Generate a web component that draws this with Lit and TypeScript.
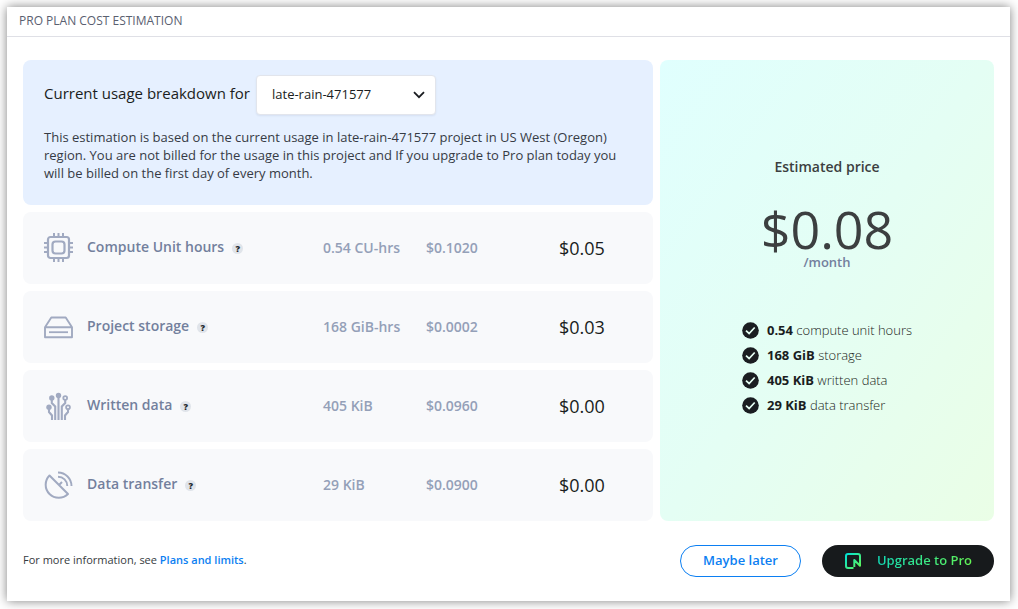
import { LitElement, html, css, svg } from "lit";
import { customElement, property } from "lit/decorators.js";

interface UsageRow {
  icon: string;
  name: string;
  usage: string;
  rate: string;
  total: string;
}

const ROWS: UsageRow[] = [
  { icon: "chip", name: "Compute Unit hours", usage: "0.54 CU-hrs", rate: "$0.1020", total: "$0.05" },
  { icon: "drive", name: "Project storage", usage: "168 GiB-hrs", rate: "$0.0002", total: "$0.03" },
  { icon: "branches", name: "Written data", usage: "405 KiB", rate: "$0.0960", total: "$0.00" },
  { icon: "dish", name: "Data transfer", usage: "29 KiB", rate: "$0.0900", total: "$0.00" },
];

const INCLUDED = [
  { amount: "0.54", label: "compute unit hours" },
  { amount: "168 GiB", label: "storage" },
  { amount: "405 KiB", label: "written data" },
  { amount: "29 KiB", label: "data transfer" },
];

const ICONS: Record<string, unknown> = {
  chip: svg`
    <rect x="4" y="4" width="21" height="21" rx="2.5" stroke-width="2.2"/>
    <rect x="8.500" y="8.500" width="12" height="12" rx="3" stroke-width="2.2"/>
    <path stroke-width="2" d="M10 0v3M14.500 0v3M19 0v3M10 26v3M14.500 26v3M19 26v3M0 10h3M0 14.500h3M0 19h3M26 10h3M26 14.500h3M26 19h3"/>`,
  drive: svg`
    <path stroke-width="1.9" stroke-linejoin="round" d="M1 15.200 7.300 5.500h14.400l6.300 9.700v10H1zM1 15.200h27"/>
    <path stroke-width="1.800" d="M5 20.200h19"/>`,
  branches: svg`
    <path stroke-width="2.100" d="M14.500 4v25M7.800 7v5l3.400 3.500v13.500M21.200 7v5l-3.400 3.500v13.500M5 17v4l3 3.500v4.500M24 17v4l-3 3.500v4.500"/>
    <g fill="currentColor" stroke="none"><circle cx="14.500" cy="4.500" r="2.700"/><circle cx="7.800" cy="7" r="2.700"/><circle cx="5" cy="16.300" r="2.700"/></g>
    <g fill="#f8f9fb" stroke-width="1.800"><circle cx="21.200" cy="7" r="1.900"/><circle cx="24" cy="16.300" r="1.900"/></g>`,
  dish: svg`
    <path stroke-width="2" stroke-linejoin="round" d="M5.500 5.500a12.600 12.600 0 0 0 18.500 18.500zM15 15l3-3"/>
    <path stroke-width="1.900" d="M14 2.500a13.500 13.500 0 0 1 13.500 13.500M14 6.700a9.300 9.300 0 0 1 9.300 9.300"/>`,
};

@customElement("usage-table")
export class UsageTable extends LitElement {
  @property({ attribute: false }) rows: UsageRow[] = [];

  static styles = css`
    :host { display: block; }
    table {
      width: 100%;
      display: flex;
      flex-direction: column;
      gap: 7px;
    }
    tbody { display: contents; }
    tr {
      display: grid;
      grid-template-columns: 43px 236fr 103fr 133fr 94fr;
      align-items: center;
      height: 72px;
      padding: 0 0 1px 21px;
      box-sizing: border-box;
      border-radius: 8px;
      background: #f8f9fb;
    }
    td, th { padding: 0; text-align: left; font-weight: 600; white-space: nowrap; }
    .icon { height: 30px; color: #a1aac1; }
    .icon svg { display: block; width: 30px; height: 30px; fill: none; stroke: currentColor; }
    .name { display: flex; align-items: center; gap: 8px; font-size: 14px; line-height: 20px; padding-bottom: 1px; color: #73809d; }
    .help {
      width: 11px; height: 11px; padding: 0; border: 0; border-radius: 50%;
      margin-top: 3px;
      background: #e0e4ea; color: #24272c;
      font: 800 9px/11px "Open Sans", sans-serif;
    }
    .usage, .rate { font-size: 14px; color: #94a0b8; }
    .total { font-size: 18px; font-weight: 500; color: #1a1d21; }
  `;

  render() {
    return html`<table aria-label="Usage breakdown"><tbody>${this.rows.map(
      (r) => html`<tr>
        <td class="icon"><svg viewBox="0 0 30 30" aria-hidden="true">${ICONS[r.icon]}</svg></td>
        <th class="name" scope="row">${r.name}<button class="help" type="button">?</button></th>
        <td class="usage">${r.usage}</td>
        <td class="rate">${r.rate}</td>
        <td class="total">${r.total}</td>
      </tr>`
    )}</tbody></table>`;
  }
}

@customElement("price-card")
export class PriceCard extends LitElement {
  static styles = css`
    :host {
      display: flex;
      flex-direction: column;
      align-items: center;
      justify-content: center;
      padding-bottom: 10px;
      border-radius: 8px;
      background: linear-gradient(125deg, #e0fffe 0%, #e4fef4 50%, #eafee6 100%);
      color: #3c3f40;
    }
    .title { margin: 0; font-size: 14px; line-height: 20px; font-weight: 600; }
    .price { margin-top: 28px; font-size: 52px; line-height: 48px; }
    .period { font-size: 13px; line-height: 18px; color: #73809d; font-weight: 600; }
    ul { list-style: none; margin: 50px 0 0; padding: 0; display: grid; gap: 7px; }
    li { display: flex; align-items: center; gap: 8px; font-size: 13px; line-height: 18px; font-weight: 300; color: #1a1d21; }
    svg { width: 17px; height: 17px; }
    b { font-weight: 700; }
  `;

  render() {
    return html`
      <h2 class="title">Estimated price</h2>
      <div class="price">$0.08</div>
      <div class="period">/month</div>
      <ul>${INCLUDED.map(
        (i) => html`<li>
          <svg viewBox="0 0 17 17" aria-hidden="true"><circle cx="8.500" cy="8.500" r="8.300" fill="#1a1d21"/><path d="M4 8.700l3.100 2.800 5.600-6" fill="none" stroke="#e6fff4" stroke-width="1.700"/></svg>
          <span><b>${i.amount}</b> ${i.label}</span>
        </li>`
      )}</ul>`;
  }
}

@customElement("app-root")
export class AppRoot extends LitElement {
  static styles = css`
    :host {
      display: block;
      padding: 7px 8px 8px 7px;
      font-family: "Open Sans", sans-serif;
      color: #1a1d21;
      background: #fff;
    }
    .panel { background: #fff; box-shadow: 0 0 10px rgba(0, 0, 0, 0.5); }
    .head {
      margin: 0; padding: 0 12px 1px; border-bottom: 1px solid #dfe0e6;
      font-size: 12px; line-height: 28px; font-weight: 500; color: #5a6070;
    }
    .body { padding: 23px 16px 24px; }
    .columns { display: grid; grid-template-columns: 630fr 334fr; gap: 7px; }
    .left { display: grid; gap: 7px; }
    .intro { background: #e6f0ff; border-radius: 8px; padding: 15px 21px 23px; }
    .picker { display: flex; align-items: center; gap: 6px; }
    .picker label { font-size: 15px; font-weight: 500; line-height: 20px; padding-bottom: 4px; }
    .select { display: grid; align-items: center; }
    .select select, .select svg { grid-area: 1 / 1; }
    select {
      appearance: none; width: 180px; height: 40px; padding: 0 15px 2px;
      border: 1px solid #e2e5ec; border-radius: 4px; background: #fff;
      box-shadow: 0 1px 2px rgba(30, 50, 90, 0.08);
      font: 500 13px "Open Sans", sans-serif; color: #1a1d21;
    }
    .select svg { justify-self: end; margin-right: 11px; width: 12px; height: 8px; pointer-events: none; }
    .intro p { margin: 13px 0 0; font-size: 13px; line-height: 18px; color: #363b45; }
    .foot { display: flex; align-items: center; margin-top: 24px; }
    .info { margin: 0 auto 0 0; padding-bottom: 2px; font-size: 11px; line-height: 16px; color: #363b40; }
    .info a { color: #0c7ff2; text-decoration: none; font-weight: 600; }
    .btn {
      height: 32px; border-radius: 16px; padding: 0 22px 2px;
      font: 600 13px "Open Sans", sans-serif;
    }
    .later { border: 1px solid #0c7ff2; background: #fff; color: #0c7ff2; }
    .upgrade {
      display: flex; align-items: center; gap: 16px; margin-left: 21px;
      border: 0; background: #171a1c; padding: 0 22px 0 23px;
    }
    .upgrade svg { width: 16px; height: 16px; }
    .upgrade span { padding-bottom: 2px; background: linear-gradient(90deg, #12d8b5, #63f655); background-clip: text; -webkit-background-clip: text; color: transparent; }
  `;

  render() {
    return html`<main class="panel">
      <h1 class="head">PRO PLAN COST ESTIMATION</h1>
      <div class="body">
        <div class="columns">
          <div class="left">
            <section class="intro">
              <div class="picker">
                <label for="project">Current usage breakdown for</label>
                <div class="select">
                  <select id="project"><option>late-rain-471577</option></select>
                  <svg viewBox="0 0 12 8" aria-hidden="true"><path d="M1 1.200l5 5 5-5" fill="none" stroke="#1a1d21" stroke-width="1.800"/></svg>
                </div>
              </div>
              <p>This estimation is based on the current usage in late-rain-471577 project in US West (Oregon) region. You are not billed for the usage in this project and If you upgrade to Pro plan today you will be billed on the first day of every month.</p>
            </section>
            <usage-table .rows=${ROWS}></usage-table>
          </div>
          <price-card></price-card>
        </div>
        <div class="foot">
          <p class="info">For more information, see <a href="#plans">Plans and limits</a>.</p>
          <button class="btn later" type="button">Maybe later</button>
          <button class="btn upgrade" type="button">
            <svg viewBox="0 0 16 16" aria-hidden="true">
              <defs><linearGradient id="g" x1="0" y1="0" x2="1" y2="1"><stop offset="0" stop-color="#00e0d5"/><stop offset="1" stop-color="#63f655"/></linearGradient></defs>
              <path d="M8.500 15H3a2 2 0 0 1-2-2V3a2 2 0 0 1 2-2h10a2 2 0 0 1 2 2v9.800L9.300 7V14" fill="none" stroke="url(#g)" stroke-width="2" stroke-linejoin="round"/>
            </svg>
            <span>Upgrade to Pro</span>
          </button>
        </div>
      </div>
    </main>`;
  }
}
